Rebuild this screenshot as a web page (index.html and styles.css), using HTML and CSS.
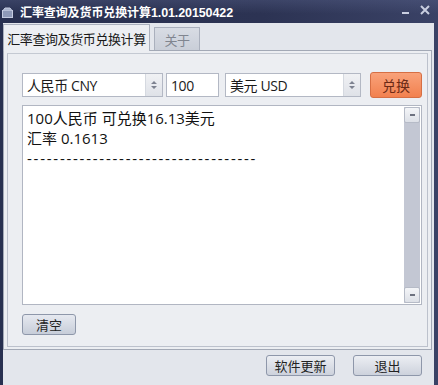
FILE: index.html
```html
<!DOCTYPE html>
<html>
<head>
<meta charset="utf-8">
<link rel="stylesheet" href="styles.css">
</head>
<body>
<div class="window">
  <div class="titlebar">
    <svg class="app-icon" width="11" height="11" viewBox="0 0 11 11">
      <rect x="0.5" y="3.5" width="10" height="7" fill="#8f9ab8" stroke="#c4cbe0"/>
      <path d="M1 3.5 L3 1 L8 1 L10 3.5" fill="#aab3cc" stroke="#c4cbe0"/>
    </svg>
    <span class="title">汇率查询及货币兑换计算<span class="ver">1.01.20150422</span></span>
    <div class="controls">
      <svg width="10" height="10" viewBox="0 0 10 10"><rect x="1" y="7" width="7" height="2" fill="#c9cee0"/></svg>
      <svg width="10" height="10" viewBox="0 0 10 10"><path d="M1 1 L9 9 M9 1 L1 9" stroke="#c9cee0" stroke-width="2"/></svg>
    </div>
  </div>
  <div class="client">
    <div class="tabs">
      <div class="tab active">汇率查询及货币兑换计算</div>
      <div class="tab">关于</div>
    </div>
    <div class="panel">
      <div class="group">
        <div class="row">
          <div class="combo c1"><span class="val">人民币 CNY</span><span class="spin"><svg width="6" height="10" viewBox="0 0 6 10"><path d="M0 4 L3 1 L6 4 Z M0 6 L3 9 L6 6 Z" fill="#7d8290"/></svg></span></div>
          <div class="input">100</div>
          <div class="combo c2"><span class="val">美元 USD</span><span class="spin"><svg width="6" height="10" viewBox="0 0 6 10"><path d="M0 4 L3 1 L6 4 Z M0 6 L3 9 L6 6 Z" fill="#7d8290"/></svg></span></div>
          <div class="btn convert">兑换</div>
        </div>
        <div class="output">
          <div class="text">
            <div>100人民币 可兑换16.13美元</div>
            <div>汇率 0.1613</div>
            <div class="dashes">-----------------------------------</div>
          </div>
          <div class="scrollbar">
            <div class="sb-btn"><span class="grip"></span></div>
            <div class="sb-track"></div>
            <div class="sb-btn"><span class="grip"></span></div>
          </div>
        </div>
        <div class="clear-row"><div class="btn clear">清空</div></div>
      </div>
    </div>
    <div class="footer">
      <div class="btn foot">软件更新</div>
      <div class="btn foot">退出</div>
    </div>
  </div>
</div>
</body>
</html>
```

FILE: styles.css
```css
* { box-sizing: border-box; }
html, body { margin: 0; padding: 0; }
body {
  width: 438px;
  height: 385px;
  overflow: hidden;
  background: #262c48;
  font-family: "Open Sans", "Noto Sans CJK SC", sans-serif;
  color: #1a1a1a;
}
.window {
  width: 438px;
  height: 385px;
  display: flex;
  flex-direction: column;
  background: linear-gradient(90deg, #283050 0%, #2c3353 60%, #3a4266 100%);
}
.titlebar {
  height: 23px;
  display: flex;
  align-items: center;
  padding-left: 2px;
  background: linear-gradient(180deg, rgba(90,100,140,0.35) 0%, rgba(40,46,74,0) 60%);
}
.app-icon { margin-right: 7px; margin-top: 2px; }
.title {
  color: #ffffff;
  font-family: "Noto Sans CJK SC", sans-serif;
  font-weight: bold;
  font-size: 12px;
  letter-spacing: -0.1px;
}
.title .ver {
  font-family: "Liberation Sans", sans-serif;
  font-weight: bold;
  font-size: 12.5px;
}
.controls {
  margin-left: auto;
  margin-right: 8px;
  display: flex;
  gap: 9px;
  align-items: center;
  margin-top: -3px;
}
.client {
  flex: 1;
  margin: 0 4px 0 3px;
  background: #e3e6ec;
  display: flex;
  flex-direction: column;
}
.tabs {
  height: 27px;
  display: flex;
  align-items: flex-end;
  gap: 4px;
}
.tab {
  font-family: "Noto Sans CJK SC", sans-serif;
  font-size: 13px;
  letter-spacing: -0.4px;
  height: 23px;
  width: 46px;
  border: 1px solid #aab0bd;
  border-bottom: none;
  background: linear-gradient(#d8dce4, #c9ced8);
  color: #80858f;
  display: flex;
  align-items: center;
  justify-content: center;
}
.tab.active {
  width: 147px;
  height: 27px;
  background: #eceef2;
  color: #1a1a1a;
  position: relative;
  margin-bottom: -1px;
  z-index: 1;
}
.panel {
  height: 300px;
  width: 429px;
  border: 1px solid #a3a9b6;
  background: #eceef2;
  padding: 2px 3px 1px 3px;
}
.group {
  height: 294px;
  border: 1px solid #bcc1cc;
  border-top-color: #c4c9d2;
  padding: 18px 0 0 14px;
  display: flex;
  flex-direction: column;
}
.row {
  display: flex;
  align-items: center;
  height: 26px;
}
.combo, .input {
  height: 24px;
  border: 1px solid #b3b8c4;
  background: #ffffff;
  display: flex;
  align-items: center;
  font-family: "Open Sans", "Noto Sans CJK SC", sans-serif;
  font-size: 14px;
  letter-spacing: -0.4px;
}
.combo .val { padding-left: 4px; flex: 1; white-space: nowrap; }
.combo .spin {
  width: 17px;
  height: 22px;
  border-left: 1px solid #d5d9e0;
  background: linear-gradient(#f0f1f4, #dfe2e8);
  display: flex;
  align-items: center;
  justify-content: center;
}
.c1 { width: 141px; }
.input { width: 53px; margin-left: 3px; padding-left: 4px; }
.c2 { width: 136px; margin-left: 6px; }
.btn {
  display: flex;
  align-items: center;
  justify-content: center;
  font-family: "Noto Sans CJK SC", sans-serif;
  font-size: 13px;
  border-radius: 3px;
}
.convert {
  width: 52px;
  height: 26px;
  margin-left: 9px;
  background: linear-gradient(#f9a27a, #f2814f);
  border: 1px solid #d66f44;
  color: #6b2a16;
  font-size: 14px;
}
.output {
  margin-top: 7px;
  width: 400px;
  height: 200px;
  border: 1px solid #b1b6c2;
  background: #ffffff;
  display: flex;
}
.text {
  flex: 1;
  padding: 2px 0 0 4px;
  font-family: "Open Sans", "Noto Sans CJK SC", sans-serif;
  font-size: 15px;
  line-height: 20px;
  color: #111;
}
.dashes { letter-spacing: 1.75px; }
.scrollbar {
  width: 16px;
  margin: 1px 1px 1px 0;
  display: flex;
  flex-direction: column;
  background: #c3c7d3;
}
.sb-btn {
  height: 16px;
  background: linear-gradient(#f4f5f8, #dde0e7);
  border: 1px solid #b6bbc7;
  border-radius: 2px;
  display: flex;
  align-items: center;
  justify-content: center;
}
.grip { width: 5px; height: 2px; background: #6d7280; }
.sb-track { flex: 1; }
.clear-row { margin-top: 9px; display: flex; }
.clear {
  width: 54px;
  height: 21px;
  border: 1px solid #8e97aa;
  background: linear-gradient(#e6e9f0, #c7cdd9);
  color: #222;
}
.footer {
  display: flex;
  justify-content: flex-end;
  gap: 18px;
  padding: 5px 12px 0 0;
}
.foot {
  width: 69px;
  height: 21px;
  border: 1px solid #8e97aa;
  background: linear-gradient(#eceef3, #cdd2dc);
  color: #222;
}
```
